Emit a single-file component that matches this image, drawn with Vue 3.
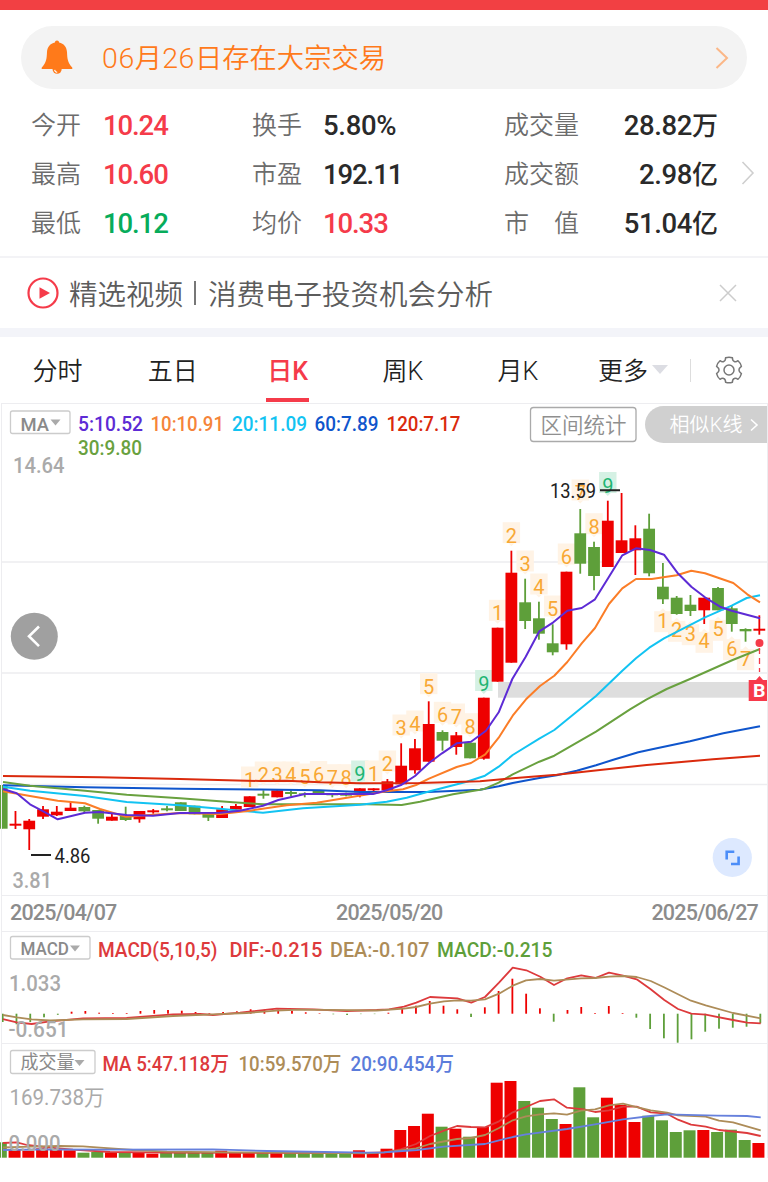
<template>
  <div class="page">
    <div class="top-bar"></div>

    <div class="notice">
      <svg class="bell" width="32" height="36" viewBox="0 0 32 36">
        <path
          d="M16 0.5c1.3 0 2 .8 2.1 2 4.6 1 7.600 4.400 7.900 9.500.3 6.500.6 10.500 5 15.200.9 1.100.4 1.800-.8 1.800H1.800c-1.200 0-1.700-.7-.8-1.800 4.400-4.700 4.700-8.700 5-15.200.3-5.100 3.300-8.500 7.900-9.500.1-1.200.8-2 2.100-2z"
          fill="#ff7a1a"
        />
        <path d="M11.500 29a4.600 4.800 0 0 0 9.200 0z" fill="#ff7a1a" />
        <path d="M13.600 29.800a3 3 0 0 0 2.600 2.500" stroke="#fff" stroke-width="1.200" fill="none" />
      </svg>
      <span class="notice-text"><b>06</b>月<b>26</b>日存在大宗交易</span>
      <svg class="notice-arrow" width="14" height="22" viewBox="0 0 14 22">
        <path d="M1.500 1l10.500 10L1.500 21" fill="none" stroke="#fbb787" stroke-width="2" />
      </svg>
    </div>

    <div class="stats">
      <template v-for="s in stats" :key="s.label">
        <span class="label">{{ s.label }}</span>
        <span :class="['value', s.color, { right: s.unit, wide: s.wide }]">{{ s.value }}<i v-if="s.unit">{{ s.unit }}</i></span>
      </template>
      <svg class="stats-arrow" width="14" height="24" viewBox="0 0 14 24">
        <path d="M1.500 1l10.500 11L1.500 23" fill="none" stroke="#cfcfcf" stroke-width="1.600" />
      </svg>
    </div>

    <div class="video">
      <svg width="32" height="32" viewBox="0 0 32 32">
        <circle cx="16" cy="16" r="14.500" fill="none" stroke="#f53b4a" stroke-width="2.200" />
        <path d="M12.500 10.200l10.500 5.800-10.500 5.800z" fill="#f53b4a" />
      </svg>
      <span class="video-text">精选视频<b></b>消费电子投资机会分析</span>
      <svg width="18" height="18" viewBox="0 0 18 18">
        <path d="M1 1l16 16M17 1L1 17" stroke="#ccc" stroke-width="1.500" />
      </svg>
    </div>

    <div class="tabs">
      <div
        v-for="tab in tabs"
        :key="tab"
        :class="['tab', { active: tab === activeTab }]"
        @click="activeTab = tab"
      >
        <span>{{ tab }}</span>
        <svg v-if="tab === '更多'" width="16" height="9" viewBox="0 0 16 9">
          <path d="M0 0h16L8 9z" fill="#dcdde3" />
        </svg>
      </div>
      <div class="setting">
        <svg width="28" height="28" viewBox="0 0 28 28" fill="none" stroke="#777" stroke-width="1.500">
          <path
            d="M10.600 1.800Q14 .6 17.400 1.800Q17.500 4.900 19.300 5.500Q20.800 6.300 23 4.700Q25.500 6.800 26.400 10.400Q23.900 12.300 24 14Q23.900 15.700 26.400 17.600Q25.500 21.200 23 23.300Q20.800 21.700 19.300 22.500Q17.500 23.100 17.400 26.200Q14 27.400 10.600 26.200Q10.500 23.100 8.700 22.500Q7.200 21.700 5 23.300Q2.500 21.200 1.600 17.600Q4.100 15.700 4 14Q4.100 12.300 1.600 10.400Q2.500 6.800 5 4.700Q7.200 6.300 8.700 5.500Q10.500 4.900 10.600 1.800z"
            stroke-linejoin="round"
          />
          <circle cx="14" cy="14" r="5" />
        </svg>
      </div>
    </div>

    <!-- K line -->
    <div class="panel kline">
      <svg width="768" height="492" viewBox="0 403 768 492">
        <path d="M1 562H767M1 673H767M1 784.500H767" stroke="#ededf0" stroke-width="1.300" />
        <rect x="498" y="682" width="252" height="15.700" fill="#dedede" />

        <g v-for="s in signals" :key="'s' + s[0]">
          <rect
            :x="cx(s[0]) - 8.700"
            :y="s[2] - (s[0] > 47 ? 16.500 : 20.500)"
            width="17.400"
            height="21"
            :fill="s[1] === 9 ? '#d5f1e4' : '#fff3e5'"
          />
          <path :d="pointer(s)" :fill="s[1] === 9 ? '#d5f1e4' : '#fff3e5'" />
          <text
            :x="cx(s[0])"
            :y="s[2]"
            text-anchor="middle"
            font-size="20"
            :fill="s[1] === 9 ? '#1fb573' : '#f8a834'"
          >{{ s[1] }}</text>
        </g>

        <g v-for="(c, i) in candles" :key="'c' + i" :fill="c[0] ? RED : GREEN">
          <rect :x="cx(i) - 0.900" :y="c[1]" width="1.800" :height="c[4] - c[1]" />
          <rect :x="cx(i) - 5.900" :y="c[2]" width="11.800" :height="c[3] - c[2]" />
        </g>

        <polyline
          v-for="l in maLines"
          :key="l.color"
          :points="l.points"
          :stroke="l.color"
          fill="none"
          stroke-width="2"
          stroke-linejoin="round"
        />

        <path d="M600 490.300h20M31 855h20" stroke="#222" stroke-width="2" />
        <path d="M759.500 648v24" stroke="#f53b4a" stroke-width="1.300" stroke-dasharray="6 4" />
        <circle cx="759.500" cy="643" r="4" fill="#f53b4a" />
        <path d="M748.700 680h7.300l3.500-4 3.500 4H768v21h-19.300z" fill="#f7394b" />

        <rect class="btn" x="10.500" y="411" width="59.500" height="22.500" rx="2" />
        <path d="M50.500 419.500h10l-5 6z" fill="#aaa" />
        <text
          v-for="t in klineTexts"
          :key="t[0]"
          :x="t[1]"
          :y="t[2]"
          :textLength="t[3]"
          lengthAdjust="spacingAndGlyphs"
          :font-size="t[4]"
          :fill="t[5]"
          :font-weight="t[6]"
        >{{ t[0] }}</text>

        <rect x="530.500" y="407.500" width="105.500" height="34" rx="3" fill="#fff" stroke="#aaa" stroke-width="1.300" />
        <text x="540.500" y="432.500" textLength="86" font-size="21.500" fill="#8f8f8f" font-weight="350">区间统计</text>
        <path d="M767 406H663.500a18.500 18.500 0 0 0 0 37H767z" fill="#d0d0d0" />
        <text x="669.500" y="432" textLength="73" font-size="20" fill="#fff" font-weight="350">相似K线</text>
        <path d="M751 419.500l6 5.500-6 5.500" stroke="#fff" stroke-width="1.600" fill="none" />

        <circle cx="34.300" cy="636.300" r="23.500" fill="#a0a0a0" />
        <path d="M39 626.500l-10 9.800 10 9.800" stroke="#fff" stroke-width="2.600" fill="none" />
        <circle cx="732.300" cy="857.500" r="19.600" fill="#dde9ff" />
        <path d="M734.300 851.800h-7.600v7.600M731 864h7.600v-7.600" stroke="#4b8df8" stroke-width="2.600" fill="none" />
      </svg>
    </div>

    <div class="panel dates">
      <span>2025/04/07</span>
      <span>2025/05/20</span>
      <span>2025/06/27</span>
    </div>

    <!-- MACD -->
    <div class="panel macd">
      <svg width="768" height="112" viewBox="0 931 768 112">
        <rect
          v-for="(v, i) in macd"
          :key="i"
          :x="cx(i) + 0.100"
          :y="Math.min(v, 1013.700)"
          width="1.800"
          :height="Math.abs(v - 1013.700)"
          :fill="v < 1013.700 ? RED : GREEN"
        />
        <polyline
          v-for="l in macdLines"
          :key="l.color"
          :points="l.points"
          :stroke="l.color"
          fill="none"
          stroke-width="1.800"
          stroke-linejoin="round"
        />
        <rect class="btn" x="10.500" y="936.500" width="79.500" height="22.500" rx="2" />
        <path d="M70 945.500h10l-5 6z" fill="#aaa" />
        <text
          v-for="t in macdTexts"
          :key="t[0]"
          :x="t[1]"
          :y="t[2]"
          :textLength="t[3]"
          lengthAdjust="spacingAndGlyphs"
          :font-size="t[4]"
          :fill="t[5]"
          :font-weight="t[6]"
        >{{ t[0] }}</text>
      </svg>
    </div>

    <!-- volume -->
    <div class="panel volume">
      <svg width="768" height="115" viewBox="0 1043 768 115">
        <rect
          v-for="(v, i) in volumes"
          :key="i"
          :x="cx(i) - 6.900"
          :y="v"
          width="12"
          :height="1157.700 - v"
          :fill="candles[i][0] ? RED : GREEN"
        />
        <polyline
          v-for="l in volumeLines"
          :key="l.color"
          :points="l.points"
          :stroke="l.color"
          fill="none"
          stroke-width="1.800"
          stroke-linejoin="round"
        />
        <rect class="btn" x="10.500" y="1050.500" width="84.500" height="23" rx="2" />
        <path d="M74.500 1060h10l-5 6z" fill="#aaa" />
        <text
          v-for="t in volumeTexts"
          :key="t[0]"
          :x="t[1]"
          :y="t[2]"
          :textLength="t[3]"
          lengthAdjust="spacingAndGlyphs"
          :font-size="t[4]"
          :fill="t[5]"
          :font-weight="t[6]"
        >{{ t[0] }}</text>
      </svg>
    </div>
  </div>
</template>

<script setup>
import { ref } from 'vue'

const RED = '#ee0000'
const GREEN = '#5e9f3a'

const tabs = ['分时', '五日', '日K', '周K', '月K', '更多']
const activeTab = ref('日K')

const stats = [
  { label: '今开', value: '10.24', color: 'up' },
  { label: '换手', value: '5.80%', wide: true },
  { label: '成交量', value: '28.82', unit: '万' },
  { label: '最高', value: '10.60', color: 'up' },
  { label: '市盈', value: '192.11' },
  { label: '成交额', value: '2.98', unit: '亿' },
  { label: '最低', value: '10.12', color: 'down' },
  { label: '均价', value: '10.33', color: 'up' },
  { label: '市　值', value: '51.04', unit: '亿' },
]

// center x of the i-th trading day
function cx(i) {
  return 1.7 + i * 13.775
}

// up, high, body top, body bottom, low
const candles = [
  [0, 785, 785, 828.7, 828.7], [1, 811, 823.7, 825.7, 829], [1, 819, 820.7, 829.3, 850],
  [1, 806, 809.3, 816.7, 819], [1, 806, 811.7, 815.3, 816], [1, 802.3, 807.7, 811, 811],
  [0, 805.7, 807, 811.3, 812.7], [0, 810, 810, 818.7, 823.7], [1, 814, 816.7, 820.7, 820.7],
  [0, 806.7, 816, 820, 821], [1, 811, 811, 819.3, 822.7], [1, 809, 810.3, 812.3, 813.7],
  [0, 806, 808.3, 810.3, 811.3], [0, 802.3, 802.3, 811, 811], [0, 805.7, 805.7, 814.3, 814.3],
  [0, 813.3, 813.3, 817.7, 821], [1, 806, 809.3, 818, 818], [1, 804, 806, 809.7, 809.7],
  [1, 796.3, 796.3, 807, 807], [0, 790.3, 793.7, 795.7, 798.7], [1, 790.3, 790.3, 797.3, 797.3],
  [0, 790.3, 792, 794, 796.3], [0, 792.3, 793.3, 794.7, 797.3], [0, 791, 791, 794, 794],
  [0, 793, 794, 795.3, 797.3], [0, 792.7, 794.3, 795.7, 796.3], [1, 788.3, 788.3, 792.3, 797.3],
  [1, 788.3, 788.3, 790.3, 792.3], [1, 779, 781.3, 790.3, 790.3], [1, 743.3, 765.7, 784.3, 784.3],
  [1, 739, 748.3, 770.3, 773.7], [1, 701.3, 724, 761.7, 761.7], [0, 730.3, 732, 740.7, 750.7],
  [1, 732, 735.3, 747, 754.7], [0, 742.7, 742.7, 758.3, 758.3], [1, 697.7, 697.7, 758.7, 759.7],
  [1, 627.7, 627.7, 681.7, 681.7], [1, 550.7, 572.7, 662.7, 662.7], [0, 578.7, 602.3, 621, 629],
  [0, 601.7, 618.3, 633.7, 639.7], [0, 624.3, 643.3, 652.3, 655.3], [1, 571.7, 571.7, 644.3, 649.7],
  [0, 509, 533.3, 563.7, 573.7], [0, 541.7, 547, 576, 590.3], [1, 500.7, 520.7, 567, 567],
  [1, 493, 540.3, 553, 553], [1, 525.3, 538.3, 550.3, 575], [0, 513.7, 528.7, 573.3, 576.3],
  [0, 563, 586.7, 599.3, 604], [0, 596, 597.7, 614, 614.7], [0, 595, 604.7, 611, 616],
  [1, 597.7, 597.7, 610.3, 624], [0, 587, 588, 610.3, 610.3], [0, 606, 608.3, 624, 631.7],
  [0, 628.3, 629, 631.3, 641.7], [1, 615.3, 628.7, 630.7, 634.7],
]

// day index, number, text baseline
const signals = [
  [18, 1, 787], [19, 2, 782], [20, 3, 782], [21, 4, 782], [22, 5, 784], [23, 6, 781.5],
  [24, 7, 784.7], [25, 8, 784.7], [26, 9, 781], [27, 1, 781], [28, 2, 771], [29, 3, 735],
  [30, 4, 731], [31, 5, 693.7], [32, 6, 722.3], [33, 7, 724], [34, 8, 733.7], [35, 9, 690.5],
  [36, 1, 620.3], [37, 2, 542.7], [38, 3, 571], [39, 4, 594], [40, 5, 616], [41, 6, 564],
  [42, 7, 500], [43, 8, 533.7], [44, 9, 492.5], [48, 1, 627.7], [49, 2, 637.3], [50, 3, 640.7],
  [51, 4, 648.3], [52, 5, 636.3], [53, 6, 655.7], [54, 7, 665.7],
]

function pointer(s) {
  const x = cx(s[0])
  if (s[0] > 47) return `M${x - 3} ${s[2] - 16.5}l3 -3 3 3z`
  return `M${x - 3} ${s[2] + 0.5}l3 3 3 -3z`
}

const maLines = [
  { color: '#0f55cc', points: '3,785.3 85,787.3 180,788.7 260,789.5 320,790.3 360,792 428,792 480,789.7 485,788.700 498.7,786.3 512.7,783 539.3,778 556.7,775.3 576.7,770.7 596,765.3 613.3,759.7 638.3,752.3 653.3,749 690,741.3 723.3,733.3 760,726.3' },
  { color: '#69a13f', points: '3,782 30,785.7 85,790.7 126.7,794.7 180,798.3 233,802.3 263,804.3 366.7,804.3 401.7,805 420,801.7 453,794.3 480,789.7 485,788.7 498.7,782.7 512.7,774.3 539.3,761.7 554.3,755.7 596,731.7 630,709.3 646.7,699.3 666.7,689 690,679 732.7,660 760,649' },
  { color: '#12c3f2', points: '3,786.7 30,790.7 85,796 126.7,802 180,805.3 220,808.7 240,810.7 263,812.7 303,808.3 360,804.7 386.7,801.7 406.7,797.7 428,791.7 466.7,781.7 485,775.7 498.7,766.7 512.7,755 539.3,738.7 554.3,730 596,696 622.3,670.7 636,658.3 649.3,647.7 664,638.3 705,617.3 731.7,605.7 746.7,598 760,595.3' },
  { color: '#fb7d27', points: '3,791.3 30,796 57.7,800.7 85,803.3 100,809 126,816.7 153,814.7 180,813 220,814 250,810.7 286.7,805.3 316.7,802.7 353,796.7 386.7,791.3 403,789.3 416,785 429,778.7 456.7,767 471,763 485.3,754.3 498.7,737.7 512.7,715.7 526,699.3 540,686 554.3,675.7 567.3,662 581.7,643.3 595,628 609,604 622.3,588.3 636,579 651.7,579 676.7,575.3 691.3,570.7 705,573.3 733.3,583 747.3,594.3 760,602.3' },
  { color: '#da2a0d', points: '3,776 100,777.3 180,779 260,781 286.7,780.7 320,782.3 360,783.3 420,783 480,781.3 512.7,778.3 556.7,774.7 600,770 646.7,765 713,759.3 760,755.7' },
  { color: '#5d2bd5', points: '3,789 16.7,793.3 30,804.3 43.3,811.3 57.7,819.3 85,812.7 100,812 126.7,815 153,815.7 180,813 220,812.7 240,810.7 263,805.7 278.3,800 305,794 373,794 386.7,790.3 401.7,784.7 415,776 429,763 442,753.3 456.7,743.3 471,741.7 486,730.7 498.7,712.3 512.3,679 525.7,656.7 539.3,631.3 553.3,622.3 567.3,610.7 581.7,608 595,599.3 609,576.7 622.3,555.3 636,548.3 650,550 664,554.7 677.3,572.7 691.3,586.7 705,597.3 720,606.7 731.7,610.7 760,618.3' },
]

// bar end y, zero axis is 1013.7
const macd = [
  1022, 1024.3, 1022, 1017.3, 1014.8, 1011.7, 1011, 1012.7, 1013, 1013, 1011, 1010, 1010, 1010.7,
  1012, 1013, 1012, 1011.3, 1009.3, 1009.7, 1009.7, 1011, 1012.3, 1013.2, 1014.3, 1015, 1014.1, 1014.1,
  1012.7, 1009, 1005.7, 1001, 1005.7, 1009.3, 1017, 1007.3, 991, 978.7, 993.7, 1008.3, 1021.7, 1010,
  1007, 1013, 1006, 1013, 1017.7, 1029, 1038.3, 1042.7, 1039.3, 1031.7, 1028.7, 1027.7, 1026.7, 1023.3,
]

const macdLines = [
  { color: '#dd3a3c', points: '3,1019 16.7,1022.3 31.7,1024 50,1021.3 83,1018.3 126.7,1018 173,1014.3 200,1014 213,1015 240,1012.7 276.7,1008.7 313,1009.3 346.7,1011 376.7,1010 389,1009.3 404,1006.7 416.3,1002.7 430,997 457.3,998.3 471.3,1002.7 485,997 499,982.7 512.7,967.7 526.3,970.3 540.3,976.7 554,985 567.3,978.3 581.3,975.3 595.3,978 609,972.7 623,975.7 636.7,979.3 650.7,989.3 664.3,1000 678,1009 691.3,1013.7 705.7,1014.7 733,1020 747.3,1022.7 760.7,1023.3' },
  { color: '#ad8c58', points: '3,1015 16.7,1017.3 31.7,1019.3 50,1020.5 83,1019.3 126.7,1019 173,1016 213,1014.3 246.7,1013 276.7,1010.7 300,1009.7 376.7,1010.5 404,1008.7 416,1007 430,1003.7 444,1001.3 457.3,1000.3 471,1000.7 485,999.3 499,993.7 512.7,985.7 526,980.3 540,979 554,980.7 581,978.3 595,978 609,976.7 623,976 636.7,977 650.7,981 664,987.3 691,1000.7 705.7,1005.3 733,1013 760.7,1018.3' },
]

// bar top y
const volumes = [
  1142.3, 1150, 1150.7, 1148.3, 1149.3, 1150.3, 1152.7, 1152, 1152.3, 1153, 1153, 1153.7, 1153, 1152,
  1152.7, 1153, 1150.7, 1152, 1152.7, 1152.7, 1153, 1152.3, 1153, 1153, 1153, 1154, 1150.3, 1153,
  1148.7, 1130, 1126, 1113.7, 1126.7, 1128.7, 1136.7, 1127, 1082.7, 1081, 1101, 1107.7, 1119, 1124,
  1087.3, 1117.3, 1097.7, 1105, 1122, 1115.7, 1120.3, 1132, 1130.3, 1130, 1132, 1129.7, 1140, 1143,
]

const volumeLines = [
  { color: '#dd3a3c', points: '3,1143 16.7,1142.3 27,1145 50,1147.7 73,1149.7 110,1152 167,1152.7 367,1153 384,1152.3 400.7,1149.3 416,1144 430,1136 444,1130.7 457,1126 471,1127 485,1127.3 499,1121.3 512.7,1112.3 526,1107 540,1101 554,1099.3 567,1107.7 584,1109.3 595,1112 609,1110.3 623,1106.7 636.7,1106.7 650.7,1112.3 667,1113.7 678,1119.7 691,1124.7 705.7,1126.7 719,1130 747,1133 760.7,1136' },
  { color: '#ad8c58', points: '3,1147.500 30,1146.7 60,1146 83,1146.3 100,1147.7 133,1150 167,1151.7 233,1152.3 367,1153.3 384,1152.3 416,1148.3 430,1144 457,1139 471,1138 485,1135 499,1128 512.7,1120.3 526,1116.3 540,1114.3 554,1113.3 567,1114.7 581,1110.7 595,1109.3 609,1105.3 623,1103.7 636.7,1107 650.7,1110.3 667,1112.7 678,1115.3 705.7,1116.7 719,1120.7 733,1122.3 760.7,1130.3' },
  { color: '#6680dc', points: '3,1150 43,1149.3 110,1149.7 213,1149.3 267,1151 367,1152.7 384,1152.3 417,1150 444,1146.7 485,1144 499,1140.3 512.7,1137 526,1134.3 567,1129 595,1124.3 623,1119.3 650.7,1116 667,1114.3 717,1115.7 747,1116 760.7,1117.3' },
]

// text, x, baseline, width, size, color, weight
const klineTexts = [
  ['MA', 20.5, 430.5, 28.5, 19, '#8a8a8a', 500],
  ['5:10.52', 78, 431, 65, 20.5, '#5d2bd5', 500],
  ['10:10.91', 150.5, 431, 73.5, 20.5, '#f5843a', 500],
  ['20:11.09', 232, 431, 75, 20.5, '#12c3f2', 500],
  ['60:7.89', 314.5, 431, 64, 20.5, '#0f55cc', 500],
  ['120:7.17', 386.5, 431, 74, 20.5, '#da2a0d', 500],
  ['30:9.80', 78, 454.5, 64, 20.5, '#69a13f', 500],
  ['14.64', 13, 472.5, 51.5, 22, '#aaa', 500],
  ['13.59', 550, 497.5, 46, 20, '#222', 400],
  ['4.86', 54.5, 863, 36, 20, '#222', 400],
  ['3.81', 12.5, 888, 39.5, 22, '#aaa', 500],
  ['B', 753, 696.5, 12.5, 18, '#fff', 700],
]

const macdTexts = [
  ['MACD', 20.5, 954.5, 48.5, 19, '#8a8a8a', 500],
  ['MACD(5,10,5)', 98, 956.500, 119.5, 20.5, '#dd3a3c', 500],
  ['DIF:-0.215', 229.5, 956.5, 93, 20.5, '#dd3a3c', 500],
  ['DEA:-0.107', 330, 956.5, 99.5, 20.5, '#ad8c58', 500],
  ['MACD:-0.215', 437, 956.5, 115.5, 20.5, '#5e9f3a', 500],
  ['1.033', 9, 990.500, 52, 22, '#aaa', 500],
  ['-0.651', 8.5, 1036.7, 60, 21.5, '#aaa', 500],
]

const volumeTexts = [
  ['成交量', 20.5, 1069, 54, 19, '#8a8a8a', 400],
  ['MA 5:47.118万', 102.5, 1071, 126.5, 20.5, '#dd3a3c', 500],
  ['10:59.570万', 238.5, 1071, 103, 20.5, '#ad8c58', 500],
  ['20:90.454万', 350.5, 1071, 103.5, 20.5, '#5b7cdb', 500],
  ['169.738万', 9.5, 1104.5, 95, 22, '#aaa', 400],
  ['0.000', 8.5, 1151, 52, 21.5, '#aaa', 500],
]
</script>

<style>
body {
  margin: 0;
  background: #fff;
}
</style>

<style scoped>
.page {
  width: 768px;
  height: 1182px;
  overflow: hidden;
  background: #fff;
  font-family: Roboto, "Noto Sans CJK SC", sans-serif;
}

.top-bar {
  height: 10px;
  background: #f24043;
}

.notice {
  margin: 16px 21px 0;
  height: 63px;
  border-radius: 32px;
  background: #f3f3f3;
  display: flex;
  align-items: center;
}

.bell {
  margin-left: 20px;
}

.notice-text {
  flex: 1;
  margin-left: 29px;
  padding-bottom: 3px;
  font-size: 27.3px;
  font-weight: 350;
  color: #ff7a1a;
}

.notice-text b {
  font-size: 28.5px;
  font-weight: 300;
  letter-spacing: 0.6px;
}

.notice-arrow {
  margin-right: 18px;
}

.stats {
  position: relative;
  height: 147px;
  margin-top: 12px;
  padding: 0 50px 8px 31px;
  display: grid;
  grid-template-columns: 72px 149px 71px 181px 100px 114px;
  grid-template-rows: repeat(3, 49px);
  align-items: center;
  white-space: nowrap;
}

.label {
  padding-bottom: 6px;
  font-size: 25px;
  font-weight: 350;
  color: #6c6c6c;
}

.value {
  font-size: 27.5px;
  font-weight: 500;
  line-height: 32px;
  letter-spacing: -1.1px;
  color: #2a2a2a;
}

.wide {
  letter-spacing: -0.3px;
}

.value i {
  font-style: normal;
  font-size: 26px;
  line-height: 0;
  letter-spacing: 0;
}

.right {
  text-align: right;
  letter-spacing: -0.4px;
}

.up {
  color: #f53b4a;
}

.down {
  color: #07ac5b;
}

.stats-arrow {
  position: absolute;
  right: 13px;
  top: 60px;
}

.video {
  height: 70px;
  border-top: 2px solid #f3f3f6;
  border-bottom: 9px solid #f3f4f9;
  padding: 0 31px 0 27px;
  display: flex;
  align-items: center;
}

.video-text {
  flex: 1;
  margin-left: 10px;
  padding-bottom: 2px;
  display: flex;
  align-items: center;
  font-size: 28.5px;
  font-weight: 350;
  color: #5c5c5c;
}

.video-text b {
  width: 2px;
  height: 24px;
  margin: 2px 12px 0 11px;
  background: #777;
}

.tabs {
  height: 66px;
  display: grid;
  grid-template-columns: repeat(6, 115.1px) 1fr;
}

.tab {
  position: relative;
  display: flex;
  align-items: center;
  justify-content: center;
  gap: 4px;
  padding-bottom: 2px;
  font-size: 25px;
  font-weight: 350;
  color: #222;
}

.active {
  color: #f53b4a;
  font-weight: 500;
}

.active::after {
  content: "";
  position: absolute;
  bottom: 1px;
  left: 50%;
  width: 43px;
  height: 4px;
  margin-left: -21.5px;
  background: #f53b4a;
}

.setting {
  display: flex;
  align-items: center;
  justify-content: center;
  position: relative;
  padding-right: 1px;
}

.setting::before {
  content: "";
  position: absolute;
  left: -1px;
  top: 22px;
  width: 1px;
  height: 23px;
  background: #ddd;
}

.panel {
  box-sizing: border-box;
  position: relative;
}

/* frame goes over the plot */
.panel::after {
  content: "";
  position: absolute;
  inset: 0 0 0 1px;
  border: solid #ededf0;
  border-width: 1px 1px 0 1px;
  pointer-events: none;
}

.panel svg {
  display: block;
}

.kline {
  height: 492px;
}

.dates {
  height: 36px;
  padding: 0 10px 2px;
  display: grid;
  grid-template-columns: 326px 1fr auto;
  align-items: center;
  font-size: 21.5px;
  font-weight: 500;
  color: #8c8c8c;
  letter-spacing: -0.8px;
}

.macd {
  height: 112px;
}

.volume {
  height: 115px;
}

.btn {
  fill: #fff;
  stroke: #ccc;
  stroke-width: 1.300;
}
</style>
